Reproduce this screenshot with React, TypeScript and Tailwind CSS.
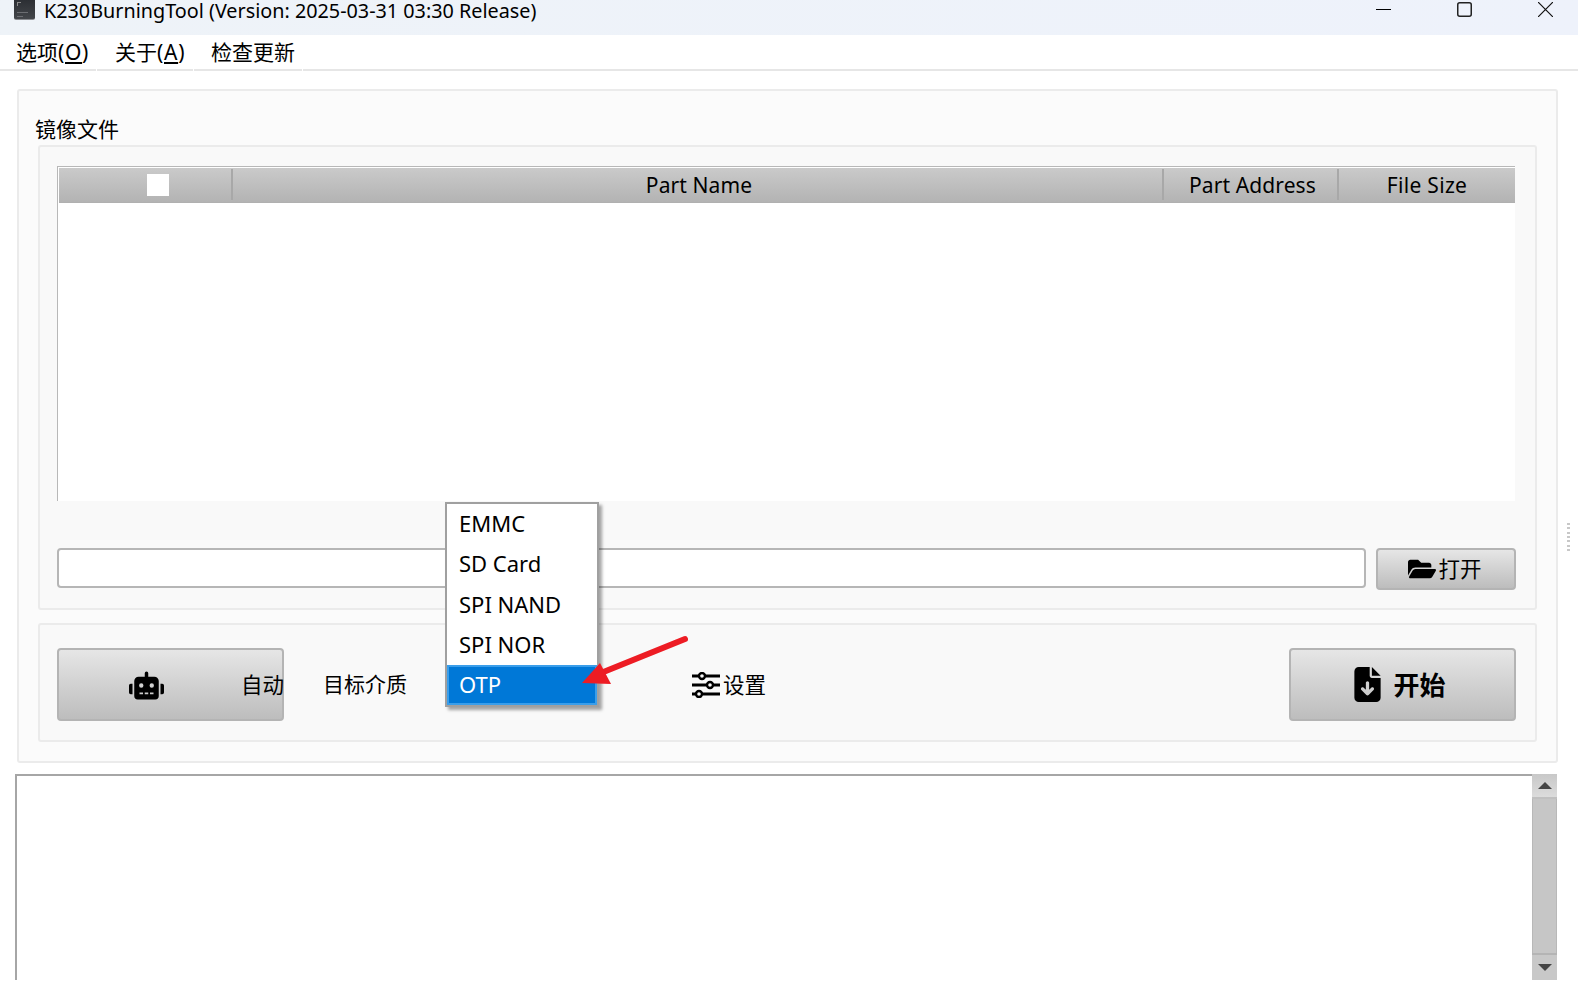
import React from "react";
import { FaFolderOpen, FaRobot } from "react-icons/fa";
import { FaFileArrowDown } from "react-icons/fa6";

const btn = "bg-gradient-to-b from-[#e6e6e6] to-[#bdbdbd] border-2 border-[#b4b4b4] rounded-[4px]";
const box = "border-2 border-[#ebebeb] rounded-[3px]";

function Settings() {
  return (
    <svg width="28" height="26" viewBox="0 0 28 26" fill="none" stroke="#000" strokeWidth="3">
      <path d="M0 4H6.5M13.5 4H28M0 13H14.5M21.5 13H28M0 22H3.5M10.5 22H28" />
      <circle cx="10" cy="4" r="3" strokeWidth="2.4" />
      <circle cx="18" cy="13" r="3" strokeWidth="2.4" />
      <circle cx="7" cy="22" r="3" strokeWidth="2.4" />
    </svg>
  );
}

function HeaderCell({ className, children }: { className: string; children?: React.ReactNode }) {
  return <div className={"flex items-center justify-center tracking-[0.1px] " + className}>{children}</div>;
}

function Sep() {
  return <div className="w-[2px] h-[31px] mt-[1px] bg-[#a8a8a8] shrink-0" />;
}

export default function App() {
  const items = ["EMMC", "SD Card", "SPI NAND", "SPI NOR"];
  return (
    <div className="relative w-[1578px] h-[990px] overflow-hidden bg-white flex flex-col text-black text-[21px] leading-none font-['Noto_Sans','Noto_Sans_CJK_SC',sans-serif]">
      {/* title bar */}
      <div className="h-[35px] shrink-0 flex bg-gradient-to-r from-[#eef3f8] to-[#eef2fb]">
        <div className="w-[21px] h-[20px] ml-[14px] bg-gradient-to-b from-[#2c2f34] to-[#43464a] rounded-b-[2px] border-b border-[#8a8c90] flex flex-col items-start pl-[3px] pt-[2px] gap-[3px] shrink-0">
          <div className="w-[4px] h-[4px] border-l border-t border-[#8a8a8a]" />
          <div className="w-[11px] h-[1px] mt-[3px] bg-[#6c6e72]" />
          <div className="w-[6px] h-[1px] bg-[#6c6e72]" />
        </div>
        <div className="ml-[9px] text-[19.8px] leading-[21px] whitespace-nowrap">K230BurningTool (Version: 2025-03-31 03:30 Release)</div>
        <div className="flex-1" />
        <div className="w-[81px] pt-[9px]"><div className="w-[15px] h-[1px] bg-black" /></div>
        <div className="w-[81px] pt-[2px]">
          <svg width="15" height="15" viewBox="0 0 15 15" fill="none" stroke="#222" strokeWidth="1.5"><rect x="0.75" y="0.75" width="13.5" height="13.5" rx="2" /></svg>
        </div>
        <svg className="mt-[2px] mr-[25px]" width="15" height="15" viewBox="0 0 15 15" stroke="#111" strokeWidth="1.2"><path d="M0 0L15 15M15 0L0 15" /></svg>
      </div>
      {/* menu */}
      <div className="h-[36px] shrink-0 flex gap-[1px] bg-white">
        <div className="w-[96px] h-full border-b-2 border-[#e6e6e6] pl-[16px] pt-[7px] whitespace-nowrap">选项<span className="tracking-[0.7px]">(<u>O</u>)</span></div>
        <div className="w-[96px] h-full border-b-2 border-[#e6e6e6] pl-[18px] pt-[7px] whitespace-nowrap">关于<span className="tracking-[0.7px]">(<u>A</u>)</span></div>
        <div className="w-[108px] h-full border-b-2 border-[#e6e6e6] pl-[17px] pt-[7px] whitespace-nowrap">检查更新</div>
        <div className="flex-1 h-full border-b-2 border-[#e6e6e6]" />
      </div>
      {/* main group */}
      <div className={"ml-[17px] mt-[18px] w-[1541px] h-[674px] shrink-0 bg-[#fbfbfb] px-[19px] " + box}>
        <div className="h-[54px] pt-[28px] -ml-[3px] leading-[21px]">镜像文件</div>
        <div className={"h-[465px] bg-[#f9f9f9] pl-[17px] pr-[19px] pt-[19px] " + box}>
          {/* table */}
          <div className="h-[335px] mr-[1px] bg-white border-l border-t border-[#b8b8b8] flex flex-col">
            <div className="h-[35px] shrink-0 mt-[1px] ml-[1px] flex bg-gradient-to-b from-[#cacaca] to-[#b3b3b3] border-b border-[#b0b0b0]">
              <HeaderCell className="w-[172px]"><div className="w-[22px] h-[22px] bg-white ml-[26px]" /></HeaderCell>
              <Sep />
              <HeaderCell className="w-[929px] pl-[3px]">Part Name</HeaderCell>
              <Sep />
              <HeaderCell className="w-[173px] pl-[4px]">Part Address</HeaderCell>
              <Sep />
              <HeaderCell className="flex-1 tracking-[0.3px]">File Size</HeaderCell>
            </div>
          </div>
          <div className="mt-[47px] flex items-start gap-[10px]">
            <div className="w-[1309px] h-[40px] bg-white border-2 border-[#b6b6b6] rounded-[4px]" />
            <div className={"w-[140px] h-[42px] flex items-center justify-center gap-[2px] pr-[2px] " + btn}>
              <FaFolderOpen size={28} />
              <span className="text-[21.5px]">打开</span>
            </div>
          </div>
        </div>
        <div className={"mt-[13px] h-[119px] bg-[#f9f9f9] pl-[17px] pr-[19px] pt-[23px] flex items-start " + box}>
          <div className={"w-[227px] h-[73px] flex items-center pl-[70px] shrink-0 " + btn}>
            <FaRobot size={35} className="mt-[1px] shrink-0" />
            <span className="ml-[77px] shrink-0 whitespace-nowrap text-[21.5px]">自动</span>
          </div>
          <div className="h-[73px] ml-[39px] flex items-center whitespace-nowrap">目标介质</div>
          <div className="h-[73px] ml-[285px] flex items-center gap-[3px] whitespace-nowrap">
            <Settings />
            <span className="text-[21.5px]">设置</span>
          </div>
          <div className="flex-1" />
          <div className={"w-[227px] h-[73px] flex items-center justify-center gap-[8px] pr-[9px] shrink-0 " + btn}>
            <FaFileArrowDown size={35} />
            <span className="text-[26px] font-bold">开始</span>
          </div>
        </div>
      </div>
      {/* log */}
      <div className="ml-[15px] mt-[11px] w-[1542px] h-[206px] shrink-0 flex bg-white border-l-2 border-t-2 border-[#a6a6a6]">
        <div className="flex-1" />
        <div className="w-[25px] -mt-[2px] flex flex-col bg-[#c4c4c4]">
          <div className="h-[25px] flex items-center justify-center bg-gradient-to-b from-[#c8c8c8] to-[#dcdcdc] border-b-2 border-[#c0c0c0]">
            <div className="w-0 h-0 border-x-[7px] border-x-transparent border-b-[7px] border-b-[#444]" />
          </div>
          <div className="flex-1 bg-[#c6c6c6] border-x border-[#b8b8b8]" />
          <div className="h-[27px] flex items-center justify-center bg-[#c8c8c8] border-t-2 border-[#b4b4b4]">
            <div className="w-0 h-0 border-x-[7px] border-x-transparent border-t-[7px] border-t-[#444]" />
          </div>
        </div>
      </div>
      {/* splitter dots */}
      <div className="absolute left-[1567px] top-[523px] w-[3px] h-[28px] flex flex-col justify-between">
        {[0,1,2,3,4,5,6].map((i) => <div key={i} className="h-[2px] bg-[#c8c8c8]" />)}
      </div>
      {/* dropdown */}
      <div className="absolute left-[445px] top-[502px] w-[154px] h-[205px] bg-white border-2 border-[#a0a0a0] shadow-[3px_3px_3px_rgba(0,0,0,0.35)] flex flex-col">
        {items.map((t) => (
          <div key={t} className="h-[40.3px] flex items-center pl-[12px] pb-[2px] text-[22px]">{t}</div>
        ))}
        <div className="flex-1 flex items-center pl-[10px] pb-[2px] text-[22px] text-white bg-[#0078d7] border-2 border-[#3a9eea]">OTP</div>
      </div>
      {/* annotation arrow */}
      <svg className="absolute left-[570px] top-[630px]" width="130" height="65" viewBox="570 630 130 65">
        <path d="M685 639L596 675" stroke="#ed1c24" strokeWidth="6" strokeLinecap="round" />
        <path d="M582 683L600 663L611 684Z" fill="#ed1c24" />
      </svg>
    </div>
  );
}
